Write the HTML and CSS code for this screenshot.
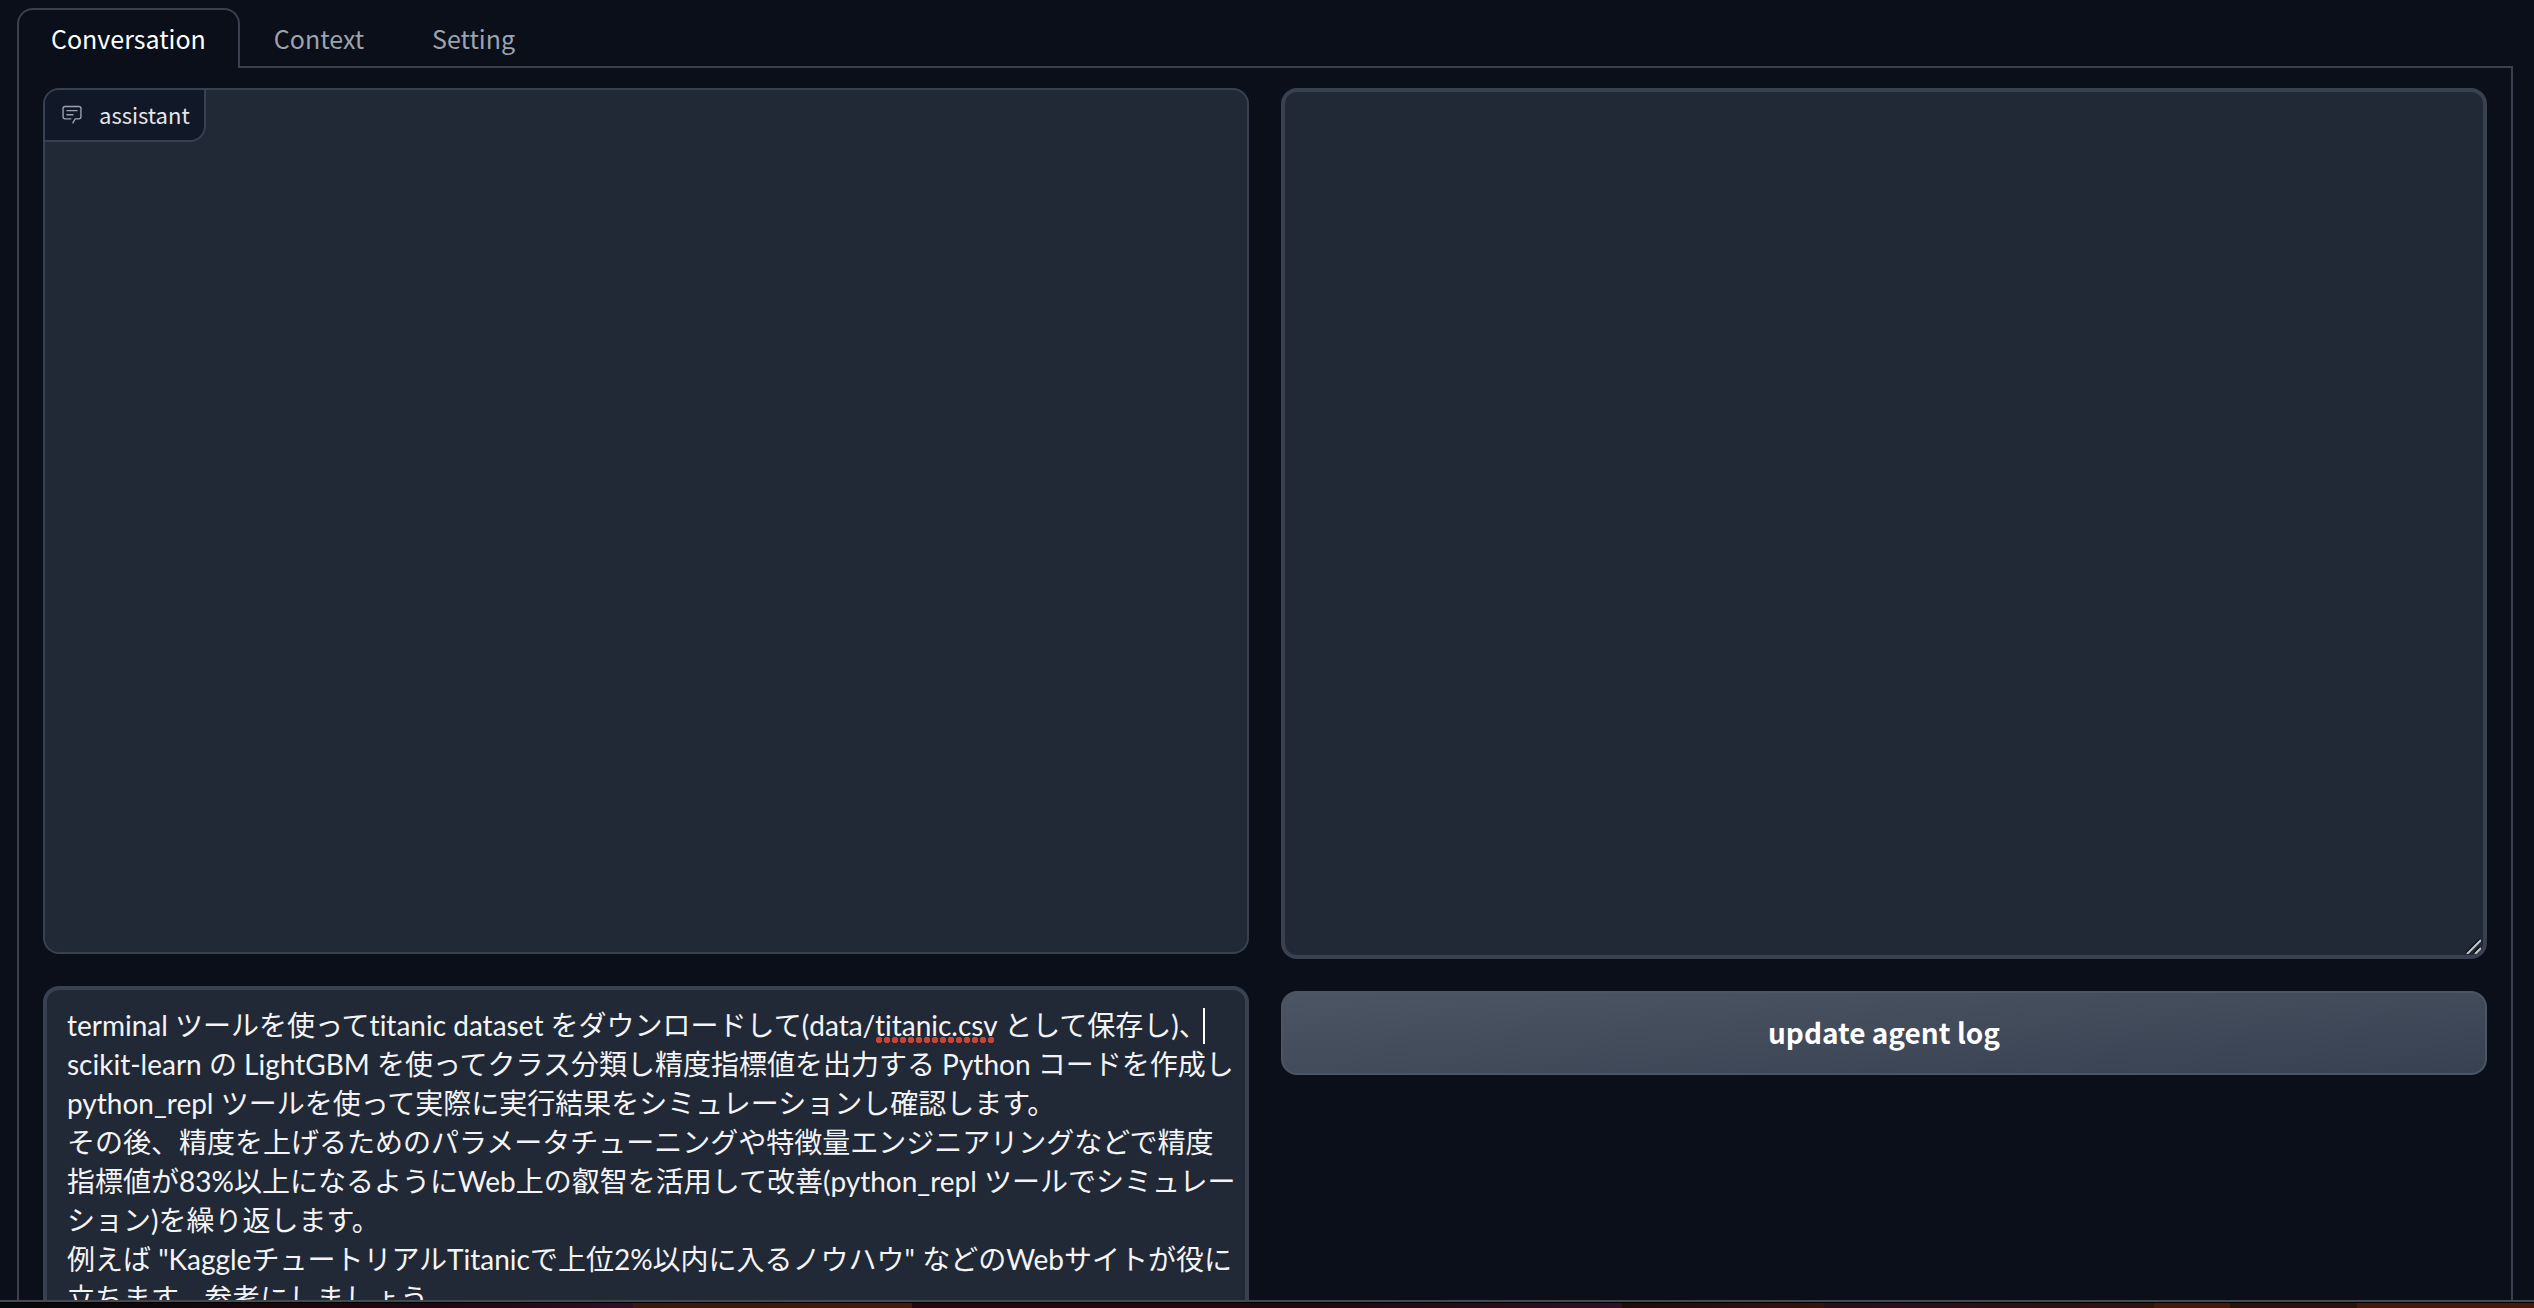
FILE: index.html
```html
<!DOCTYPE html>
<html lang="ja">
<head>
<meta charset="utf-8">
<meta name="viewport" content="width=device-width, initial-scale=1">
<title>Conversation</title>
<link rel="stylesheet" href="styles.css">
</head>
<body>
<main class="app">
  <div class="tabs" role="tablist">
    <button class="tab tab-active" type="button" role="tab" aria-selected="true">Conversation</button>
    <button class="tab" type="button" role="tab" aria-selected="false">Context</button>
    <button class="tab" type="button" role="tab" aria-selected="false">Setting</button>
  </div>
  <div class="panel" role="tabpanel">
    <div class="column">
      <section class="chat" aria-labelledby="chat-label">
        <div class="chat-label">
          <svg class="chat-icon" viewBox="0 0 32 32" fill="currentColor" aria-hidden="true">
            <path d="M17.74 30L16 29l4-7h6a2 2 0 0 0 2-2V8a2 2 0 0 0-2-2H6a2 2 0 0 0-2 2v12a2 2 0 0 0 2 2h9v2H6a4 4 0 0 1-4-4V8a4 4 0 0 1 4-4h20a4 4 0 0 1 4 4v12a4 4 0 0 1-4 4h-4.84Z"/>
            <path d="M8 10h16v2H8zm0 6h10v2H8z"/>
          </svg>
          <span id="chat-label">assistant</span>
        </div>
      </section>
      <div class="field-wrap">
        <textarea class="field prompt-field" aria-label="prompt" spellcheck="false">terminal ツールを使ってtitanic dataset をダウンロードして(data/titanic.csv として保存し)、
scikit-learn の LightGBM を使ってクラス分類し精度指標値を出力する Python コードを作成し
python_repl ツールを使って実際に実行結果をシミュレーションし確認します。
その後、精度を上げるためのパラメータチューニングや特徴量エンジニアリングなどで精度指標値が83%以上になるようにWeb上の叡智を活用して改善(python_repl ツールでシミュレーション)を繰り返します。
例えば "KaggleチュートリアルTitanicで上位2%以内に入るノウハウ" などのWebサイトが役に立ちます。参考にしましょう。</textarea>
        <span class="spelling"></span>
        <span class="caret"></span>
      </div>
    </div>
    <div class="column">
      <div class="field-wrap">
        <textarea class="field log-field" aria-label="agent log"></textarea>
        <svg class="grip" viewBox="0 0 15 15" fill="none" aria-hidden="true">
          <path d="M0 14L14 0M8 14l6-6" stroke="#0b0f19" stroke-width="2"/>
          <path d="M1 15L15 1M9 15l6-6" stroke="#c4c6c9" stroke-width="2"/>
        </svg>
      </div>
      <button class="update" type="button">update agent log</button>
    </div>
  </div>
</main>
<footer class="desktop"></footer>
</body>
</html>
```
FILE: styles.css
```css
:root {
  --page: #0b0f19;
  --block: #222936;
  --line: #394150;
  --text: #f3f4f6;
  --ui-font: "Noto Sans CJK JP", sans-serif;
}

* {
  box-sizing: border-box;
}

body {
  display: flex;
  flex-direction: column;
  height: 100vh;
  margin: 0;
  overflow: hidden;
  background: var(--page);
  color: var(--text);
  font-family: var(--ui-font);
}

.app {
  display: flex;
  flex: 1;
  flex-direction: column;
  min-height: 0;
  padding: 8px 21px 0 17px;
  overflow: hidden;
}

.tabs {
  display: flex;
  flex: none;
  height: 60px;
  border-bottom: 2px solid var(--line);
}

.tab {
  height: 60px;
  padding: 0 32px 2px;
  border: 2px solid transparent;
  border-bottom: 0;
  border-radius: 16px 16px 0 0;
  background: none;
  color: #9ca3af;
  font-family: var(--ui-font);
  font-size: 25px;
}

.tab-active {
  border-color: var(--line);
  background: var(--page);
  color: #fff;
}

.panel {
  display: grid;
  flex: none;
  grid-template-columns: 1fr 1fr;
  gap: 32px;
  padding: 20px 24px 32px;
  border: 2px solid var(--line);
  border-top: 0;
}

.column {
  display: flex;
  flex-direction: column;
  gap: 32px;
}

.chat {
  height: 866px;
  border: 2px solid var(--line);
  border-radius: 16px;
  background: var(--block);
  overflow: hidden;
}

.chat-label {
  display: inline-flex;
  align-items: center;
  gap: 16px;
  height: 52px;
  padding: 0 14px 2px 16px;
  border: solid var(--line);
  border-width: 0 2px 2px 0;
  border-radius: 0 0 16px 0;
  background: #111827;
  color: #e5e7eb;
  font-size: 22px;
}

.chat-icon {
  width: 22px;
  height: 22px;
  color: #9ca3af;
}

.field-wrap {
  position: relative;
}

.field {
  display: block;
  width: 100%;
  padding: 16px 8px 16px 20px;
  border: 4px solid var(--line);
  border-radius: 16px;
  outline: 0;
  background: var(--block);
  color: var(--text);
  font-family: Lato, "Noto Sans CJK JP", sans-serif;
  font-size: 28px;
  font-variant-ligatures: none;
  line-height: 39px;
}

.field::-webkit-resizer {
  background: transparent;
}

.log-field {
  height: 871px;
  resize: vertical;
}

.prompt-field {
  height: 432px;
  resize: none;
}

.grip {
  position: absolute;
  right: 6px;
  bottom: 5px;
  width: 15px;
  height: 15px;
  pointer-events: none;
}

.spelling {
  position: absolute;
  top: 51px;
  left: 832px;
  width: 120px;
  height: 6px;
  background: radial-gradient(circle, #c5453b 3px, transparent 3px) 0 0 / 8px 6px;
}

.caret {
  position: absolute;
  top: 22px;
  left: 1160px;
  width: 2px;
  height: 36px;
  background: #fff;
}

.update {
  height: 84px;
  padding: 0 0 2px;
  border: 2px solid #4b5563;
  border-radius: 16px;
  background: linear-gradient(to bottom right, #4b5563, #374151);
  color: #fff;
  font-family: var(--ui-font);
  font-size: 28px;
  font-weight: 700;
}

.desktop {
  flex: none;
  height: 8px;
  border-top: 2px solid #474a51;
  background:
    linear-gradient(#000, #000) 0 0 / 100% 1px no-repeat,
    linear-gradient(to right, #04080f 0, #1c060d 12%, #23081a 20%, #301027 25%, #38180f 25%, #48190c 36%, #26070f 36%, #22080f 52%, #301027 64%, #200b0b 64%, #38120f 72%, #280f1e 72%, #32110f 85%, #48180f 85%, #48180f 88%, #30100d 88%, #30100d 93%, #48180f 93%);
}
```
